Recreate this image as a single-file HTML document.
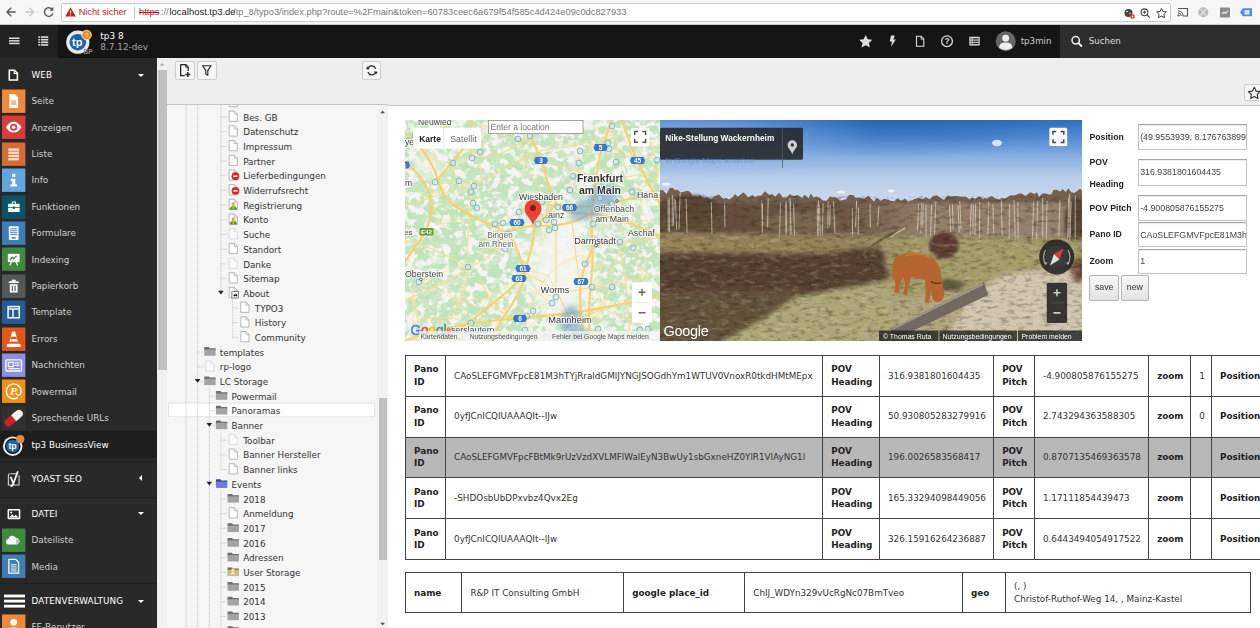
<!DOCTYPE html>
<html lang="de"><head><meta charset="utf-8"><title>tp3 8 [TYPO3 CMS 8.7.12-dev]</title>
<style>
*{box-sizing:border-box;margin:0;padding:0}
html,body{width:1260px;height:628px;overflow:hidden;background:#fff}
body{position:relative;font-family:"DejaVu Sans","Liberation Sans",sans-serif;font-size:8.8px;color:#333}
.abs{position:absolute}
/* browser chrome */
#chrome{left:0;top:0;width:1260px;height:25px;background:#f6f6f6;border-bottom:1px solid #c8c8c8}
#url{left:60.500px;top:2.600px;width:1110.500px;height:19px;background:#fff;border:1px solid #c9c9c9;border-radius:2px}
#url span{position:absolute;top:2.400px;font-family:"Liberation Sans",sans-serif;font-size:9.6px;white-space:nowrap;line-height:12px}
/* topbar */
#topbar{left:0;top:25px;width:1260px;height:33px;background:#151515}
#tb-left{left:0;top:25px;width:58px;height:33px;background:#222}
#tb-search{left:1060px;top:25px;width:200px;height:33px;background:#2d2d2d}
/* module menu */
#modmenu{left:0;top:58px;width:156.500px;height:570px;background:#292929;overflow:hidden}
.mod{position:absolute;left:0;width:157px;height:26.4px}
.mod .ic{position:absolute;left:2.4px;top:1.9px;width:23.4px;height:24.4px}
.mod .lb{position:absolute;left:31.5px;top:1px;line-height:26.4px;font-size:8.8px;color:#cfcfcf;white-space:nowrap}
.mod.hd .lb{letter-spacing:.12px}
.mod.hd .lb{color:#fff}
.mod.act{background:#1e1e1e;height:26.800px}.mod.act .lb{color:#fff}
.caret{position:absolute;left:137.700px;top:12.600px;width:0;height:0;border-left:3px solid transparent;border-right:3px solid transparent;border-top:3.5px solid #fff}
.caretl{position:absolute;left:138.5px;top:9.5px;width:0;height:0;border-top:3px solid transparent;border-bottom:3px solid transparent;border-right:3.5px solid #fff}
/* nav frame */
#nav{left:157px;top:58px;width:231px;height:570px;background:#f5f5f5;overflow:hidden}
#treetxt span{position:absolute;font-size:8.8px;line-height:11px;color:#333;white-space:nowrap}
#navsb{left:157px;top:58px;width:10px;height:570px;background:#f1f1f1}
#navtb{left:167px;top:58px;width:221px;height:47px;background:#eee;border-bottom:1px solid #c3c3c3}
.btn{position:absolute;width:19.4px;height:19px;border:1px solid #ccc;border-radius:2px;background:#f5f5f5}
/* content */
#doch{left:388px;top:58px;width:872px;height:47.5px;background:#eee;border-bottom:1px solid #c3c3c3}

#form .fl{position:absolute;left:1089.500px;font-family:"Liberation Sans",sans-serif;font-weight:bold;font-size:8.700px;line-height:10px;color:#222;white-space:nowrap}
#form .fi{position:absolute;left:1138px;width:109px;border:1px solid #c2c2c2;border-top-color:#a5a5a5;box-shadow:inset 0 1px 1px rgba(0,0,0,.08);background:#fff;font-family:"Liberation Sans",sans-serif;font-size:8.800px;color:#444;padding-left:1.200px;white-space:nowrap;overflow:hidden;display:flex;align-items:center}
#form .fb{position:absolute;top:275.200px;height:26px;border:1px solid #b3b3b3;border-radius:2px;background:linear-gradient(#f7f7f7,#e2e2e2);font-family:"Liberation Sans",sans-serif;font-size:8.800px;color:#333;text-align:center;line-height:23.600px}
table{border-collapse:collapse;table-layout:fixed;font-size:8.800px;line-height:12.400px;color:#333}
#t1{left:405px;top:354.900px;width:866px}
#t2{left:405px;top:572.100px;width:845.300px}
td,th{border:.8px solid #444;padding:7.500px 8px;text-align:left;vertical-align:middle;height:40.600px;overflow:hidden}
#t2 td,#t2 th{height:40.400px}
th{font-weight:bold;color:#222}
tr.sel td,tr.sel th{background:#b8b8b8}
</style></head><body>
<div id="chrome" class="abs">
 <svg class="abs" style="left:0;top:0" width="60" height="25" viewBox="0 0 60 25"><g fill="none" stroke-width="1.4">
  <path d="M15.700 12h-8M11.200 7.800l-4.200 4.200 4.200 4.200" stroke="#555"/>
  <path d="M25.500 12h8M29.500 7.800l4.200 4.200-4.200 4.200" stroke="#c9c9c9"/>
  <path d="M52 9.200a4.300 4.300 0 1 0 .8 4.300" stroke="#555"/></g><path d="M53.300 6.800v4h-4z" fill="#555"/></svg>
 <div id="url" class="abs">
  <svg class="abs" style="left:3px;top:3.500px" width="11" height="10" viewBox="0 0 11 10"><path d="M5.500 0.300l5.300 9.200h-10.600z" fill="#c5221f"/><rect x="5" y="3.300" width="1" height="3.300" fill="#fff"/><rect x="5" y="7.300" width="1" height="1.100" fill="#fff"/></svg>
  <span style="left:17.200px;color:#c5221f;font-size:9.200px">Nicht sicher</span>
  <i class="abs" style="left:72.500px;top:3px;width:1px;height:12px;background:#c4c4c4"></i>
  <span style="left:77.500px;color:#c5221f;font-size:9.400px;text-decoration:line-through">https</span>
  <span style="left:99.300px;color:#777;font-size:9.400px">://</span>
  <span style="left:108px;color:#222;font-size:9.450px">localhost.tp3.de</span>
  <span style="left:171.600px;color:#777;font-size:9.300px">/tp_8/typo3/index.php?route=%2Fmain&amp;token=60783ceec6a679f54f585c4d424e09c0dc827933</span>
  <svg class="abs" style="left:1060px;top:1px" width="48" height="16" viewBox="0 0 48 16">
   <circle cx="6.500" cy="8" r="4" fill="#444"/><circle cx="5" cy="6.500" r=".8" fill="#fff"/><circle cx="8" cy="8.500" r=".7" fill="#fff"/><rect x="8.500" y="9.500" width="4" height="4" fill="#d93025"/><rect x="9.700" y="10.700" width="1.600" height="1.600" fill="#fff"/>
   <circle cx="22.500" cy="7.300" r="3.400" fill="none" stroke="#444" stroke-width="1.100"/><path d="M25 9.800l2.800 2.800M21 7.300h3M22.500 5.800v3" stroke="#444" stroke-width="1.100"/>
   <path d="M39.500 3.300l1.500 3.200 3.400.4-2.500 2.400.7 3.400-3.100-1.700-3.100 1.700.7-3.400-2.500-2.400 3.400-.4z" fill="none" stroke="#444" stroke-width="1"/></svg>
 </div>
 <svg class="abs" style="left:1172px;top:0" width="88" height="25" viewBox="0 0 88 25">
  <path d="M6 8.500h9.500v7.500h-4.500" fill="none" stroke="#555" stroke-width="1.100"/><path d="M6 16v-1.200a1.200 1.200 0 0 1 1.200 1.200zM6 12.800a3.200 3.200 0 0 1 3.200 3.200M6 10.800a5.200 5.200 0 0 1 5.200 5.200" fill="none" stroke="#555" stroke-width="1"/>
  <circle cx="31.300" cy="12.300" r="5" fill="#b9b9b9"/><path d="M28.500 9l5.600 6.600M34.100 9l-5.600 6.600" stroke="#ddd" stroke-width="1.500"/>
  <rect x="48" y="7.500" width="10" height="10" rx="1" fill="#8a8a8a"/><path d="M50 14l2-2 1.500 1.500 2.500-3" stroke="#eee" stroke-width="1.100" fill="none"/>
  <path d="M68 12.300l3-4h9v8h-9z" fill="#4a90e2"/><rect x="72.500" y="10" width="5" height="4.600" fill="#d6e6fa"/></svg>
</div>
<div id="topbar" class="abs"></div>
<div id="tb-left" class="abs"></div>
<div id="tb-search" class="abs"></div>
<svg class="abs" style="left:0;top:25px" width="160" height="33" viewBox="0 0 160 33">
 <g fill="#ddd"><rect x="9" y="12.500" width="10.500" height="1.500"/><rect x="9" y="15.100" width="10.500" height="1.500"/><rect x="9" y="17.700" width="10.500" height="1.500"/>
 <rect x="38.300" y="11.300" width="1.600" height="1.600"/><rect x="38.300" y="13.900" width="1.600" height="1.600"/><rect x="38.300" y="16.500" width="1.600" height="1.600"/><rect x="38.300" y="19.100" width="1.600" height="1.600"/>
 <rect x="40.800" y="11.300" width="7.400" height="1.600"/><rect x="40.800" y="13.900" width="7.400" height="1.600"/><rect x="40.800" y="16.500" width="7.400" height="1.600"/><rect x="40.800" y="19.100" width="7.400" height="1.600"/></g>
 <circle cx="77.800" cy="17.200" r="11.600" fill="#e9e9e9"/><circle cx="77.800" cy="17.200" r="8.300" fill="#1a64a8"/>
 <text x="77.300" y="21" text-anchor="middle" font-family="Liberation Sans,sans-serif" font-weight="bold" font-size="11" fill="#fff">tp</text>
 <circle cx="86.600" cy="10" r="4.800" fill="#ee8a2a" stroke="#f4f4f4" stroke-width=".8"/><text x="86.600" y="12.200" text-anchor="middle" font-family="Liberation Sans,sans-serif" font-size="6" fill="#fbd9b5">3</text>
 <text x="83.600" y="29.300" font-family="Liberation Sans,sans-serif" font-weight="bold" font-size="6.500" fill="#8d8d8d">BP</text>
</svg>
<div class="abs" style="left:100.300px;top:31.400px;font-size:8.900px;line-height:11px;color:#fff;white-space:nowrap">tp3 8</div>
<div class="abs" style="left:100.300px;top:41.600px;font-size:8.900px;line-height:11px;color:#a3a3a3;white-space:nowrap">8.7.12-dev</div>
<svg class="abs" style="left:855px;top:25px" width="240" height="33" viewBox="0 0 240 33">
 <path d="M10.700 10l2 4.300 4.600.5-3.400 3.200.9 4.600-4.100-2.300-4.100 2.300.9-4.600-3.400-3.200 4.600-.5z" fill="#ddd"/>
 <path d="M36 10.500h3.800l-1.500 4h2.500l-4.800 7.500 1-5.500h-2.300z" fill="#ddd"/>
 <path d="M61.500 11.300h4.700l2.600 2.600v7.400h-7.300z" fill="none" stroke="#ddd" stroke-width="1.100"/><path d="M66 11.300v2.800h2.800" fill="none" stroke="#ddd" stroke-width=".9"/>
 <circle cx="92" cy="16.200" r="5.400" fill="none" stroke="#ddd" stroke-width="1.300"/><text x="92" y="19.400" text-anchor="middle" font-family="Liberation Sans,sans-serif" font-weight="bold" font-size="8.500" fill="#ddd">?</text>
 <g fill="#ddd"><rect x="114.300" y="11.800" width="10.400" height="8.800" rx=".6"/></g><g fill="#151515"><rect x="115.500" y="13.300" width="1.300" height="1.200"/><rect x="117.600" y="13.300" width="6" height="1.200"/><rect x="115.500" y="15.600" width="1.300" height="1.200"/><rect x="117.600" y="15.600" width="6" height="1.200"/><rect x="115.500" y="17.900" width="1.300" height="1.200"/><rect x="117.600" y="17.900" width="6" height="1.200"/></g>
 <circle cx="150.700" cy="16.300" r="10" fill="#666"/><circle cx="150.700" cy="13.200" r="3.400" fill="#eee"/><path d="M144 22.500c.5-4 3-5 6.700-5s6.200 1 6.700 5c-3 3.200-10.400 3.200-13.400 0z" fill="#eee"/>
 <circle cx="220.700" cy="15.300" r="3.700" fill="none" stroke="#eee" stroke-width="1.500"/><path d="M223.400 18l3 3" stroke="#eee" stroke-width="1.800" stroke-linecap="round"/>
</svg>
<div class="abs" style="left:1020.700px;top:36px;font-size:8.700px;line-height:11px;color:#ccc;white-space:nowrap">tp3min</div>
<div class="abs" style="left:1088.700px;top:36.200px;font-size:8.700px;line-height:11px;color:#ddd;white-space:nowrap">Suchen</div>
<div id="modmenu" class="abs"><div class="mod hd" style="top:3.4px"><svg class="ic" viewBox="0 0 24 24"><path d="M7.500 7h5.300l3 3v7h-8.300z" fill="none" stroke="#fff" stroke-width="1.600"/><path d="M12.500 7v3.300h3.300" fill="none" stroke="#fff" stroke-width="1.200"/></svg><span class="lb">WEB</span><i class="caret"></i></div><div class="mod " style="top:29.1px"><svg class="ic" viewBox="0 0 24 24"><rect width="24" height="24" fill="#f0883a"/><path d="M7.5 5h6l3 3v11h-9z" fill="#fff"/><rect x="9.5" y="11" width="5" height="5" fill="#f7b98a"/></svg><span class="lb">Seite</span></div><div class="mod " style="top:55.5px"><svg class="ic" viewBox="0 0 24 24"><rect width="24" height="24" fill="#d63e3e"/><path d="M4 12c2.5-4 5-5.5 8-5.5s5.500 1.500 8 5.500c-2.500 4-5 5.500-8 5.500s-5.500-1.500-8-5.500z" fill="#fff"/><circle cx="12" cy="12" r="3.600" fill="#d63e3e"/><circle cx="12" cy="12" r="1.800" fill="#fff"/></svg><span class="lb">Anzeigen</span></div><div class="mod " style="top:81.9px"><svg class="ic" viewBox="0 0 24 24"><rect width="24" height="24" fill="#d56b35"/><g fill="#f6d9c8"><rect x="6.500" y="6" width="11" height="2.500"/><rect x="6.500" y="9.300" width="11" height="2.500"/><rect x="6.500" y="12.600" width="11" height="2.500"/><rect x="6.500" y="15.900" width="11" height="2.500"/></g></svg><span class="lb">Liste</span></div><div class="mod " style="top:108.3px"><svg class="ic" viewBox="0 0 24 24"><rect width="24" height="24" fill="#62a5df"/><g fill="#fff"><rect x="10.500" y="5.500" width="3.200" height="3.200"/><path d="M9 10.500h4.700v6h1.800v2h-7v-2h2v-4h-1.500z"/></g></svg><span class="lb">Info</span></div><div class="mod " style="top:134.7px"><svg class="ic" viewBox="0 0 24 24"><rect width="24" height="24" fill="#0c5365"/><g fill="#fff"><path d="M10 8.500v-2.300h4.400v2.300h-1.100v-1.200h-2.200v1.200z"/><rect x="6.300" y="8.500" width="11.800" height="3.500"/><rect x="6.300" y="12.700" width="11.800" height="4.200"/></g><rect x="11.300" y="11.200" width="1.800" height="2.600" fill="#0c5365"/></svg><span class="lb">Funktionen</span></div><div class="mod " style="top:161.1px"><svg class="ic" viewBox="0 0 24 24"><rect width="24" height="24" fill="#3e7db8"/><rect x="7" y="5" width="10" height="14" rx="1" fill="#fff"/><g fill="#3e7db8"><rect x="8.500" y="7" width="7" height="1"/><rect x="8.500" y="9" width="7" height="1"/><rect x="8.500" y="11" width="7" height="1"/><rect x="8.500" y="13" width="7" height="1"/><rect x="10" y="16" width="4" height="1.600"/></g></svg><span class="lb">Formulare</span></div><div class="mod " style="top:187.5px"><svg class="ic" viewBox="0 0 24 24"><rect width="24" height="24" fill="#3f8a3d"/><rect x="6" y="6.500" width="12" height="8.500" fill="#fff"/><path d="M8 13l2.500-3 1.500 1.500 3-3" stroke="#3f8a3d" stroke-width="1.300" fill="none"/><path d="M9.500 15l-1.500 3.500M14.500 15l1.500 3.500" stroke="#fff" stroke-width="1.300"/></svg><span class="lb">Indexing</span></div><div class="mod " style="top:213.9px"><svg class="ic" viewBox="0 0 24 24"><rect width="24" height="24" fill="#555859"/><g fill="#fff"><rect x="7" y="7" width="10" height="1.800"/><rect x="10" y="5.300" width="4" height="2"/><path d="M8 10h8v8.500h-8z"/></g><g fill="#555859"><rect x="10" y="11.500" width="1.200" height="5.500"/><rect x="12.800" y="11.500" width="1.200" height="5.500"/></g></svg><span class="lb">Papierkorb</span></div><div class="mod " style="top:240.3px"><svg class="ic" viewBox="0 0 24 24"><rect width="24" height="24" fill="#235c99"/><rect x="5.500" y="5.500" width="13" height="13" fill="#fff"/><g fill="#235c99"><rect x="7" y="9.500" width="3.500" height="7.500"/><rect x="12" y="9.500" width="5" height="7.500"/><rect x="7" y="7" width="10" height="1"/></g></svg><span class="lb">Template</span></div><div class="mod " style="top:266.7px"><svg class="ic" viewBox="0 0 24 24"><rect width="24" height="24" fill="#e2561c"/><path d="M10.500 4h3l3.500 13h2v3h-14v-3h2z" fill="#fff"/><g fill="#e2561c"><path d="M9.300 9.500h5.400l.8 2.500h-7z"/><path d="M7.700 14.300h8.600l.7 2.500h-10z"/></g></svg><span class="lb">Errors</span></div><div class="mod " style="top:293.1px"><svg class="ic" viewBox="0 0 24 24"><rect width="24" height="24" fill="#8b8fe0"/><rect x="4" y="6.500" width="16" height="11.500" rx="1" fill="none" stroke="#fff" stroke-width="1.400"/><rect x="6.500" y="9" width="5" height="4.500" fill="none" stroke="#fff" stroke-width="1.200"/><g fill="#fff"><rect x="13" y="9" width="5" height="1.200"/><rect x="13" y="11.500" width="5" height="1.200"/><rect x="6.500" y="15" width="11.500" height="1.200"/></g></svg><span class="lb">Nachrichten</span></div><div class="mod " style="top:319.5px"><svg class="ic" viewBox="0 0 24 24"><rect width="24" height="24" fill="#f29016"/><path d="M16.500 18.300a7.600 7.600 0 1 1 3.100-6.100c0 2.600-1.300 3.800-2.900 3.800s-2.300-1.100-2.100-2.600" fill="none" stroke="#fff" stroke-width="1.400"/><text x="11.800" y="15.800" text-anchor="middle" font-family="Liberation Serif,serif" font-style="italic" font-weight="bold" font-size="11.500" fill="#fff">P</text></svg><span class="lb">Powermail</span></div><div class="mod " style="top:345.9px"><svg class="ic" viewBox="0 0 24 24"><rect width="24" height="24" fill="#313131"/><g transform="rotate(-40 12 12)"><rect x="1" y="8" width="11" height="8" rx="4" fill="#cf2020"/><rect x="11" y="8" width="12" height="8" rx="4" fill="#f4f4f4"/><rect x="8" y="8" width="6" height="8" fill="#cf2020"/><rect x="12" y="8" width="5" height="8" fill="#f4f4f4"/></g></svg><span class="lb">Sprechende URLs</span></div><div class="mod act" style="top:373.0px"><svg class="ic" viewBox="0 0 24 24"><circle cx="11" cy="13" r="10" fill="#f2f2f2"/><circle cx="11" cy="13" r="8" fill="#0d0d0d"/><circle cx="11" cy="13" r="6.700" fill="#1a64a8"/><text x="10.800" y="16.300" text-anchor="middle" font-family="Liberation Sans,sans-serif" font-weight="bold" font-size="9" fill="#fff">tp</text><circle cx="18.700" cy="5.800" r="4" fill="#ee8a2a" stroke="#999" stroke-width=".7"/></svg><span class="lb">tp3 BusinessView</span></div><div class="mod hd" style="top:407.1px"><svg class="ic" viewBox="0 0 24 24"><path d="M9 6.500h6M17.500 8v10h-11v-9.500a2 2 0 0 1 2-2" fill="none" stroke="#ddd" stroke-width="1.100"/><path d="M8.800 9.500l2.700 6.500M16.300 4l-5 13.500c-.5 1.300-1.300 1.800-2.500 1.800" stroke="#fff" stroke-width="1.800" fill="none"/></svg><span class="lb">YOAST SEO</span><i class="caretl"></i></div><div class="mod hd" style="top:441.8px"><svg class="ic" viewBox="0 0 24 24"><rect x="6.500" y="7.500" width="11.500" height="9" rx="0.500" fill="none" stroke="#fff" stroke-width="1.600"/><path d="M7.500 15.500l3-3.500 2 2 1.500-1.500 3 3z" fill="#fff"/><circle cx="9.500" cy="10.300" r="1" fill="#fff"/></svg><span class="lb">DATEI</span><i class="caret"></i></div><div class="mod " style="top:468.4px"><svg class="ic" viewBox="0 0 24 24"><rect width="24" height="24" fill="#3f8a3d"/><path d="M6 16.500a3 3 0 0 1 .5-5.800a4 4 0 0 1 7.500-1.200a3.500 3.500 0 0 1 0 7z" fill="#fff"/><path d="M14.500 9.500l4.500 3.500l-4.500 3.500z" fill="#a9d0a8"/></svg><span class="lb">Dateiliste</span></div><div class="mod " style="top:494.6px"><svg class="ic" viewBox="0 0 24 24"><rect width="24" height="24" fill="#3e7db8"/><path d="M7 5h7l3 3v11h-10z" fill="none" stroke="#fff" stroke-width="1.300"/><g fill="#fff"><rect x="9" y="10" width="6" height="1"/><rect x="9" y="12.200" width="6" height="1"/><rect x="9" y="14.400" width="6" height="1"/><rect x="9" y="16.400" width="6" height="1"/></g></svg><span class="lb">Media</span></div><div class="mod hd" style="top:529.3px"><svg class="ic" style="left:3.500px;width:21px" viewBox="0 0 21 24" preserveAspectRatio="none"><g fill="#fff"><rect x="0" y="5.500" width="21" height="2.800"/><rect x="0" y="10.500" width="21" height="2.800"/><rect x="0" y="15.500" width="21" height="2.800"/></g></svg><span class="lb">DATENVERWALTUNG</span><i class="caret"></i></div><div class="mod " style="top:554.6px"><svg class="ic" viewBox="0 0 24 24"><rect width="24" height="24" fill="#f0883a"/><circle cx="12" cy="8" r="3.500" fill="#fff"/><path d="M5 20c0-5 3-7 7-7s7 2 7 7z" fill="#fff"/></svg><span class="lb">FE-Benutzer</span></div><div class="abs" style="left:0;top:403.4px;width:157px;height:1px;background:#202020"></div><div class="abs" style="left:0;top:438.8px;width:157px;height:1px;background:#202020"></div><div class="abs" style="left:0;top:525.3px;width:157px;height:1px;background:#202020"></div></div><!--/MODS-->
<div id="nav" class="abs"><svg class="abs" style="left:0;top:0" width="231" height="570" viewBox="157 58 231 570"><rect x="168.4" y="403.00" width="206.300" height="13.800" fill="#fff" stroke="#dcdcdc" stroke-width=".8"/><path d="M186.00 105.00V628.00" stroke="#b5b5b5" stroke-width=".8" stroke-dasharray=".8 .8"/><path d="M197.65 105.00V628.00" stroke="#b5b5b5" stroke-width=".8" stroke-dasharray=".8 .8"/><path d="M220.95 105.00V293.28" stroke="#b5b5b5" stroke-width=".8" stroke-dasharray=".8 .8"/><path d="M232.60 299.28V337.35" stroke="#b5b5b5" stroke-width=".8" stroke-dasharray=".8 .8"/><path d="M209.30 387.42V628.00" stroke="#b5b5b5" stroke-width=".8" stroke-dasharray=".8 .8"/><path d="M220.95 431.49V469.56" stroke="#b5b5b5" stroke-width=".8" stroke-dasharray=".8 .8"/><path d="M220.95 490.25V628.00" stroke="#b5b5b5" stroke-width=".8" stroke-dasharray=".8 .8"/><path d="M220.95 102.31h6.500" stroke="#b5b5b5" stroke-width=".8" stroke-dasharray=".8 .8"/><g opacity="1"><path d="M229.15 96.41h5.2l3 3v7.300h-8.200z" fill="#fff" stroke="#9a9a9a" stroke-width=".7"/><path d="M234.25 96.51v3h3" fill="none" stroke="#9a9a9a" stroke-width=".6"/></g><path d="M220.95 117.00h6.500" stroke="#b5b5b5" stroke-width=".8" stroke-dasharray=".8 .8"/><g opacity="1"><path d="M229.15 111.10h5.2l3 3v7.300h-8.200z" fill="#fff" stroke="#9a9a9a" stroke-width=".7"/><path d="M234.25 111.20v3h3" fill="none" stroke="#9a9a9a" stroke-width=".6"/></g><path d="M220.95 131.69h6.500" stroke="#b5b5b5" stroke-width=".8" stroke-dasharray=".8 .8"/><g opacity="1"><path d="M229.15 125.79h5.2l3 3v7.300h-8.200z" fill="#fff" stroke="#9a9a9a" stroke-width=".7"/><path d="M234.25 125.89v3h3" fill="none" stroke="#9a9a9a" stroke-width=".6"/></g><path d="M220.95 146.38h6.500" stroke="#b5b5b5" stroke-width=".8" stroke-dasharray=".8 .8"/><g opacity="1"><path d="M229.15 140.48h5.2l3 3v7.300h-8.200z" fill="#fff" stroke="#9a9a9a" stroke-width=".7"/><path d="M234.25 140.58v3h3" fill="none" stroke="#9a9a9a" stroke-width=".6"/></g><path d="M220.95 161.07h6.500" stroke="#b5b5b5" stroke-width=".8" stroke-dasharray=".8 .8"/><g opacity="1"><path d="M229.15 155.17h5.2l3 3v7.300h-8.200z" fill="#fff" stroke="#9a9a9a" stroke-width=".7"/><path d="M234.25 155.27v3h3" fill="none" stroke="#9a9a9a" stroke-width=".6"/></g><path d="M220.95 175.76h6.500" stroke="#b5b5b5" stroke-width=".8" stroke-dasharray=".8 .8"/><g opacity="1"><path d="M229.15 169.86h5.2l3 3v7.300h-8.200z" fill="#fff" stroke="#9a9a9a" stroke-width=".7"/><path d="M234.25 169.96v3h3" fill="none" stroke="#9a9a9a" stroke-width=".6"/></g><circle cx="235.45" cy="176.16" r="3.9" fill="#d42a2a"/><rect x="233.35" y="175.46" width="4.200" height="1.400" fill="#fff"/><path d="M220.95 190.45h6.500" stroke="#b5b5b5" stroke-width=".8" stroke-dasharray=".8 .8"/><g opacity="1"><path d="M229.15 184.55h5.2l3 3v7.300h-8.200z" fill="#fff" stroke="#9a9a9a" stroke-width=".7"/><path d="M234.25 184.65v3h3" fill="none" stroke="#9a9a9a" stroke-width=".6"/></g><circle cx="235.45" cy="190.85" r="3.9" fill="#d42a2a"/><rect x="233.35" y="190.15" width="4.200" height="1.400" fill="#fff"/><path d="M220.95 205.14h6.500" stroke="#b5b5b5" stroke-width=".8" stroke-dasharray=".8 .8"/><g opacity="1"><path d="M229.15 199.24h5.2l3 3v7.300h-8.200z" fill="#fff" stroke="#9a9a9a" stroke-width=".7"/><path d="M234.25 199.34v3h3" fill="none" stroke="#9a9a9a" stroke-width=".6"/></g><circle cx="233.35" cy="204.24" r="1.700" fill="#e8b52a"/><path d="M229.45 209.74c.8-3 2.200-4 3.900-4s3.100 1 3.900 4z" fill="#5a9a3a"/><rect x="232.55" y="205.54" width="1.600" height="3.400" fill="#e8b52a"/><path d="M220.95 219.83h6.500" stroke="#b5b5b5" stroke-width=".8" stroke-dasharray=".8 .8"/><g opacity="1"><path d="M229.15 213.93h5.2l3 3v7.300h-8.200z" fill="#fff" stroke="#9a9a9a" stroke-width=".7"/><path d="M234.25 214.03v3h3" fill="none" stroke="#9a9a9a" stroke-width=".6"/></g><circle cx="233.35" cy="218.93" r="1.700" fill="#e8b52a"/><path d="M229.45 224.43c.8-3 2.200-4 3.900-4s3.100 1 3.900 4z" fill="#5a9a3a"/><rect x="232.55" y="220.23" width="1.600" height="3.400" fill="#e8b52a"/><path d="M220.95 234.52h6.500" stroke="#b5b5b5" stroke-width=".8" stroke-dasharray=".8 .8"/><g opacity="0.5"><path d="M229.15 228.62h5.2l3 3v7.300h-8.200z" fill="#fff" stroke="#aaa" stroke-width=".7"/><path d="M234.25 228.72v3h3" fill="none" stroke="#aaa" stroke-width=".6"/></g><path d="M220.95 249.21h6.500" stroke="#b5b5b5" stroke-width=".8" stroke-dasharray=".8 .8"/><g opacity="1"><path d="M229.15 243.31h5.2l3 3v7.300h-8.200z" fill="#fff" stroke="#9a9a9a" stroke-width=".7"/><path d="M234.25 243.41v3h3" fill="none" stroke="#9a9a9a" stroke-width=".6"/></g><path d="M220.95 263.90h6.500" stroke="#b5b5b5" stroke-width=".8" stroke-dasharray=".8 .8"/><g opacity="0.5"><path d="M229.15 258.00h5.2l3 3v7.300h-8.200z" fill="#fff" stroke="#aaa" stroke-width=".7"/><path d="M234.25 258.10v3h3" fill="none" stroke="#aaa" stroke-width=".6"/></g><path d="M220.95 278.59h6.500" stroke="#b5b5b5" stroke-width=".8" stroke-dasharray=".8 .8"/><g opacity="1"><path d="M229.15 272.69h5.2l3 3v7.300h-8.200z" fill="#fff" stroke="#9a9a9a" stroke-width=".7"/><path d="M234.25 272.79v3h3" fill="none" stroke="#9a9a9a" stroke-width=".6"/></g><path d="M218.15 290.78h5.600l-2.800 3.800z" fill="#222"/><path d="M224.45 293.28h2.500" stroke="#b5b5b5" stroke-width=".8" stroke-dasharray=".8 .8"/><g opacity="1"><path d="M229.15 287.38h5.2l3 3v7.300h-8.200z" fill="#fff" stroke="#9a9a9a" stroke-width=".7"/><path d="M234.25 287.48v3h3" fill="none" stroke="#9a9a9a" stroke-width=".6"/></g><rect x="231.85" y="291.58" width="6.400" height="6.400" fill="#fff" stroke="#555" stroke-width=".7"/><path d="M233.45 296.08v-1.600h2.400v-1.200l1.700 1.900-1.700 1.900v-1.200h-1.400v.9z" fill="#111"/><path d="M232.60 307.97h6.500" stroke="#b5b5b5" stroke-width=".8" stroke-dasharray=".8 .8"/><g opacity="1"><path d="M240.80 302.07h5.2l3 3v7.300h-8.200z" fill="#fff" stroke="#9a9a9a" stroke-width=".7"/><path d="M245.90 302.17v3h3" fill="none" stroke="#9a9a9a" stroke-width=".6"/></g><path d="M232.60 322.66h6.500" stroke="#b5b5b5" stroke-width=".8" stroke-dasharray=".8 .8"/><g opacity="1"><path d="M240.80 316.76h5.2l3 3v7.300h-8.200z" fill="#fff" stroke="#9a9a9a" stroke-width=".7"/><path d="M245.90 316.86v3h3" fill="none" stroke="#9a9a9a" stroke-width=".6"/></g><path d="M232.60 337.35h6.500" stroke="#b5b5b5" stroke-width=".8" stroke-dasharray=".8 .8"/><g opacity="1"><path d="M240.80 331.45h5.2l3 3v7.300h-8.200z" fill="#fff" stroke="#9a9a9a" stroke-width=".7"/><path d="M245.90 331.55v3h3" fill="none" stroke="#9a9a9a" stroke-width=".6"/></g><path d="M197.65 352.04h6.500" stroke="#b5b5b5" stroke-width=".8" stroke-dasharray=".8 .8"/><path d="M204.25 347.04h4.600l.8 1.200h6v2h-11.400z" fill="#6e6e6e"/><rect x="204.25" y="349.44" width="11.400" height="6.300" fill="#a3a3a3"/><path d="M197.65 366.73h6.500" stroke="#b5b5b5" stroke-width=".8" stroke-dasharray=".8 .8"/><g opacity="0.5"><path d="M205.85 360.83h5.2l3 3v7.300h-8.200z" fill="#fff" stroke="#aaa" stroke-width=".7"/><path d="M210.95 360.93v3h3" fill="none" stroke="#aaa" stroke-width=".6"/></g><path d="M194.85 378.92h5.600l-2.800 3.800z" fill="#222"/><path d="M201.15 381.42h2.500" stroke="#b5b5b5" stroke-width=".8" stroke-dasharray=".8 .8"/><path d="M204.25 376.42h4.600l.8 1.200h6v2h-11.400z" fill="#6e6e6e"/><rect x="204.25" y="378.82" width="11.400" height="6.300" fill="#a3a3a3"/><path d="M209.30 396.11h6.500" stroke="#b5b5b5" stroke-width=".8" stroke-dasharray=".8 .8"/><path d="M215.90 391.11h4.600l.8 1.200h6v2h-11.400z" fill="#6e6e6e"/><rect x="215.90" y="393.51" width="11.400" height="6.300" fill="#a3a3a3"/><path d="M209.30 410.80h6.500" stroke="#b5b5b5" stroke-width=".8" stroke-dasharray=".8 .8"/><path d="M215.90 405.80h4.600l.8 1.200h6v2h-11.400z" fill="#6e6e6e"/><rect x="215.90" y="408.20" width="11.400" height="6.300" fill="#a3a3a3"/><path d="M206.50 422.99h5.600l-2.800 3.800z" fill="#222"/><path d="M212.80 425.49h2.500" stroke="#b5b5b5" stroke-width=".8" stroke-dasharray=".8 .8"/><path d="M215.90 420.49h4.600l.8 1.200h6v2h-11.400z" fill="#6e6e6e"/><rect x="215.90" y="422.89" width="11.400" height="6.300" fill="#a3a3a3"/><path d="M220.95 440.18h6.500" stroke="#b5b5b5" stroke-width=".8" stroke-dasharray=".8 .8"/><g opacity="0.5"><path d="M229.15 434.28h5.2l3 3v7.300h-8.200z" fill="#fff" stroke="#aaa" stroke-width=".7"/><path d="M234.25 434.38v3h3" fill="none" stroke="#aaa" stroke-width=".6"/></g><path d="M220.95 454.87h6.500" stroke="#b5b5b5" stroke-width=".8" stroke-dasharray=".8 .8"/><g opacity="1"><path d="M229.15 448.97h5.2l3 3v7.300h-8.200z" fill="#fff" stroke="#9a9a9a" stroke-width=".7"/><path d="M234.25 449.07v3h3" fill="none" stroke="#9a9a9a" stroke-width=".6"/></g><path d="M220.95 469.56h6.500" stroke="#b5b5b5" stroke-width=".8" stroke-dasharray=".8 .8"/><g opacity="1"><path d="M229.15 463.66h5.2l3 3v7.300h-8.200z" fill="#fff" stroke="#9a9a9a" stroke-width=".7"/><path d="M234.25 463.76v3h3" fill="none" stroke="#9a9a9a" stroke-width=".6"/></g><path d="M206.50 481.75h5.600l-2.800 3.800z" fill="#222"/><path d="M212.80 484.25h2.500" stroke="#b5b5b5" stroke-width=".8" stroke-dasharray=".8 .8"/><path d="M215.90 479.25h4.600l.8 1.200h6v2h-11.400z" fill="#3a3fa8"/><rect x="215.90" y="481.65" width="11.400" height="6.300" fill="#6f7ae0"/><path d="M220.95 498.94h6.500" stroke="#b5b5b5" stroke-width=".8" stroke-dasharray=".8 .8"/><path d="M227.55 493.94h4.600l.8 1.200h6v2h-11.400z" fill="#6e6e6e"/><rect x="227.55" y="496.34" width="11.400" height="6.300" fill="#a3a3a3"/><path d="M220.95 513.63h6.500" stroke="#b5b5b5" stroke-width=".8" stroke-dasharray=".8 .8"/><g opacity="1"><path d="M229.15 507.73h5.2l3 3v7.300h-8.200z" fill="#fff" stroke="#9a9a9a" stroke-width=".7"/><path d="M234.25 507.83v3h3" fill="none" stroke="#9a9a9a" stroke-width=".6"/></g><path d="M220.95 528.32h6.500" stroke="#b5b5b5" stroke-width=".8" stroke-dasharray=".8 .8"/><path d="M227.55 523.32h4.600l.8 1.200h6v2h-11.400z" fill="#6e6e6e"/><rect x="227.55" y="525.72" width="11.400" height="6.300" fill="#a3a3a3"/><path d="M220.95 543.01h6.500" stroke="#b5b5b5" stroke-width=".8" stroke-dasharray=".8 .8"/><path d="M227.55 538.01h4.600l.8 1.200h6v2h-11.400z" fill="#6e6e6e"/><rect x="227.55" y="540.41" width="11.400" height="6.300" fill="#a3a3a3"/><path d="M220.95 557.70h6.500" stroke="#b5b5b5" stroke-width=".8" stroke-dasharray=".8 .8"/><path d="M227.55 552.70h4.600l.8 1.200h6v2h-11.400z" fill="#6e6e6e"/><rect x="227.55" y="555.10" width="11.400" height="6.300" fill="#a3a3a3"/><path d="M220.95 572.39h6.500" stroke="#b5b5b5" stroke-width=".8" stroke-dasharray=".8 .8"/><path d="M227.55 567.39h4.600l.8 1.200h6v2h-11.400z" fill="#7d6f3c"/><rect x="227.55" y="569.79" width="11.400" height="6.300" fill="#c9b97e"/><circle cx="232.85" cy="570.19" r="1.600" fill="#f2e29a"/><path d="M229.85 574.19l3-3 3 3z" fill="#f6efc8"/><path d="M220.95 587.08h6.500" stroke="#b5b5b5" stroke-width=".8" stroke-dasharray=".8 .8"/><path d="M227.55 582.08h4.600l.8 1.200h6v2h-11.400z" fill="#6e6e6e"/><rect x="227.55" y="584.48" width="11.400" height="6.300" fill="#a3a3a3"/><path d="M220.95 601.77h6.500" stroke="#b5b5b5" stroke-width=".8" stroke-dasharray=".8 .8"/><path d="M227.55 596.77h4.600l.8 1.200h6v2h-11.400z" fill="#6e6e6e"/><rect x="227.55" y="599.17" width="11.400" height="6.300" fill="#a3a3a3"/><path d="M220.95 616.46h6.500" stroke="#b5b5b5" stroke-width=".8" stroke-dasharray=".8 .8"/><path d="M227.55 611.46h4.600l.8 1.200h6v2h-11.400z" fill="#6e6e6e"/><rect x="227.55" y="613.86" width="11.400" height="6.300" fill="#a3a3a3"/><path d="M220.95 631.15h6.500" stroke="#b5b5b5" stroke-width=".8" stroke-dasharray=".8 .8"/><path d="M227.55 626.15h4.600l.8 1.200h6v2h-11.400z" fill="#6e6e6e"/><rect x="227.55" y="628.55" width="11.400" height="6.300" fill="#a3a3a3"/></svg><div id="treetxt"><span style="left:86.15px;top:54.60px">Bes. GB</span><span style="left:86.15px;top:69.29px">Datenschutz</span><span style="left:86.15px;top:83.98px">Impressum</span><span style="left:86.15px;top:98.67px">Partner</span><span style="left:86.15px;top:113.36px">Lieferbedingungen</span><span style="left:86.15px;top:128.05px">Widerrufsrecht</span><span style="left:86.15px;top:142.74px">Registrierung</span><span style="left:86.15px;top:157.43px">Konto</span><span style="left:86.15px;top:172.12px">Suche</span><span style="left:86.15px;top:186.81px">Standort</span><span style="left:86.15px;top:201.50px">Danke</span><span style="left:86.15px;top:216.19px">Sitemap</span><span style="left:86.15px;top:230.88px">About</span><span style="left:97.80px;top:245.57px">TYPO3</span><span style="left:97.80px;top:260.26px">History</span><span style="left:97.80px;top:274.95px">Community</span><span style="left:62.85px;top:289.64px">templates</span><span style="left:62.85px;top:304.33px">rp-logo</span><span style="left:62.85px;top:319.02px">LC Storage</span><span style="left:74.50px;top:333.71px">Powermail</span><span style="left:74.50px;top:348.40px">Panoramas</span><span style="left:74.50px;top:363.09px">Banner</span><span style="left:86.15px;top:377.78px">Toolbar</span><span style="left:86.15px;top:392.47px">Banner Hersteller</span><span style="left:86.15px;top:407.16px">Banner links</span><span style="left:74.50px;top:421.85px">Events</span><span style="left:86.15px;top:436.54px">2018</span><span style="left:86.15px;top:451.23px">Anmeldung</span><span style="left:86.15px;top:465.92px">2017</span><span style="left:86.15px;top:480.61px">2016</span><span style="left:86.15px;top:495.30px">Adressen</span><span style="left:86.15px;top:509.99px">User Storage</span><span style="left:86.15px;top:524.68px">2015</span><span style="left:86.15px;top:539.37px">2014</span><span style="left:86.15px;top:554.06px">2013</span></div></div><!--/NAV-->
<div id="navsb" class="abs"><i class="abs" style="left:1px;top:12px;width:9px;height:299.600px;background:#c1c1c1"></i><svg class="abs" style="left:0;top:0" width="10" height="12"><path d="M2.800 7.500l2.200-2.600 2.200 2.600z" fill="#a3a3a3"/></svg></div>
<div id="navtb" class="abs">
 <div class="btn" style="left:8.200px;top:2.700px"><svg width="18" height="17" viewBox="1 1.300 15.500 14.600"><path d="M5 3.500h4.500l2 2v3.500M8.500 13h-3.500v-9.500" fill="none" stroke="#222" stroke-width="1.100"/><path d="M9.300 3.700v2h2" fill="none" stroke="#222" stroke-width=".8"/><path d="M9 12h4.400M11.200 9.800v4.400" stroke="#222" stroke-width="1.300"/></svg></div>
 <div class="btn" style="left:30.400px;top:2.700px"><svg width="18" height="17" viewBox="0 0 18 17"><path d="M4.500 3.800h8.600l-3.300 4.600v5l-2-1.300v-3.700z" fill="none" stroke="#222" stroke-width="1.100" stroke-linejoin="round"/></svg></div>
 <div class="btn" style="left:194.500px;top:2.700px"><svg width="18" height="17" viewBox="0 0 18 17"><path d="M12.700 6.800a4.200 4.200 0 0 0-7.600-.8M4.900 10a4.200 4.200 0 0 0 7.600.8" fill="none" stroke="#222" stroke-width="1.200"/><path d="M3.400 6.800l2.800.3-1.600-2.400zM14.200 10l-2.800-.3 1.600 2.400z" fill="#222" stroke="#222" stroke-width=".6"/></svg></div>
</div>
<div class="abs" style="left:376.700px;top:105.500px;width:11.300px;height:522.500px;background:#f1f1f1"><i class="abs" style="left:2px;top:292.300px;width:8.300px;height:162.200px;background:#c1c1c1"></i><svg class="abs" style="left:0;top:0" width="11.300" height="523"><path d="M3.300 7.200l2.300-2.700 2.300 2.700z" fill="#505050"/><path d="M3.300 516.800l2.300 2.700 2.300-2.700z" fill="#505050"/></svg></div>
<div id="doch" class="abs"></div>
<!--CONTENT--><div class="abs" style="left:1243.500px;top:83.800px;width:20px;height:17.400px;border:1px solid #ccc;border-radius:2px;background:#f5f5f5"><svg width="16" height="16" viewBox="0 0 16 16" style="position:absolute;left:1px;top:.2px"><path d="M8.300 2.300l1.800 3.800 4.100.5-3 2.900.8 4.100-3.700-2-3.700 2 .8-4.100-3-2.900 4.100-.5z" fill="none" stroke="#333" stroke-width="1.100" stroke-linejoin="round"/></svg></div><svg class="abs" style="left:405px;top:120px" width="255" height="221" viewBox="405 120 255 221" font-family="Liberation Sans,sans-serif">
<defs>
<filter id="fo" x="0" y="0" width="100%" height="100%" color-interpolation-filters="sRGB"><feTurbulence type="fractalNoise" baseFrequency=".045 .05" numOctaves="4" seed="11"/><feColorMatrix values="0 0 0 0 .76  0 0 0 0 .895  0 0 0 0 .74  6 0 0 0 -2.35"/></filter>
<filter id="fo2" x="0" y="0" width="100%" height="100%" color-interpolation-filters="sRGB"><feTurbulence type="fractalNoise" baseFrequency=".13 .14" numOctaves="3" seed="5"/><feColorMatrix values="0 0 0 0 .76  0 0 0 0 .895  0 0 0 0 .74  7 0 0 0 -3.1"/></filter>
<filter id="fo3" x="0" y="0" width="100%" height="100%" color-interpolation-filters="sRGB"><feTurbulence type="fractalNoise" baseFrequency=".12 .13" numOctaves="3" seed="31"/><feColorMatrix values="0 0 0 0 .955  0 0 0 0 .955  0 0 0 0 .94  8 0 0 0 -3.9"/></filter>
<filter id="b6"><feGaussianBlur stdDeviation="7"/></filter><filter id="b3"><feGaussianBlur stdDeviation="2.500"/></filter>
</defs>
<rect x="405" y="120" width="255" height="221" fill="#f3f3ef"/>
<g filter="url(#b6)" fill="#c6e4be"><ellipse cx="445" cy="205" rx="45" ry="50" opacity=".8"/><ellipse cx="520" cy="160" rx="55" ry="32" opacity=".8"/><ellipse cx="450" cy="300" rx="50" ry="35" opacity=".75"/><ellipse cx="640" cy="275" rx="24" ry="55" opacity=".8"/><ellipse cx="630" cy="140" rx="35" ry="20" opacity=".7"/><ellipse cx="500" cy="260" rx="20" ry="25" opacity=".5"/></g>
<rect x="405" y="120" width="255" height="221" filter="url(#fo)"/><rect x="405" y="120" width="255" height="221" filter="url(#fo2)"/><rect x="405" y="120" width="255" height="221" filter="url(#fo3)"/>
<g filter="url(#b6)" fill="#f5f5f1"><ellipse cx="560" cy="270" rx="30" ry="50" opacity=".9"/><ellipse cx="590" cy="215" rx="40" ry="14" opacity=".6"/><ellipse cx="430" cy="165" rx="16" ry="14" opacity=".7"/></g>
<g fill="none" stroke="#fae3a0" stroke-width=".9"><path d="M408 141Q406.0 139.9 415 136M408 141Q410.0 150.1 423 154M408 141Q420.5 155.1 437 160M415 136Q424.8 145.1 423 154M415 136Q432.0 145.7 437 160M453 163Q439.9 162.7 437 160M453 163Q450.4 168.4 459 181M453 163Q461.4 161.8 472 158M472 158Q471.9 149.5 480 152M472 158Q474.4 144.8 468 136M480 152Q479.5 148.8 468 136M480 152Q479.5 165.0 482 179M518 139Q524.2 139.2 530 136M518 139Q522.1 154.7 524 169M518 139Q501.4 137.3 482 125M530 136Q527.1 151.7 524 169M530 136Q508.6 127.4 482 125M474 186Q470.1 194.7 471 192M474 186Q478.3 183.1 482 179M474 186Q460.6 182.5 459 181M435 182Q431.5 183.7 426 197M435 182Q437.4 172.6 437 160M435 182Q441.7 183.0 459 181M459 181Q464.6 188.7 471 192M471 192Q470.2 200.0 473 203M473 203Q477.9 199.8 477 208M473 203Q466.7 210.6 471 214M477 208Q479.6 208.0 471 214M477 208Q473.5 201.1 471 192M519 212Q518.8 207.4 523 206M519 212Q508.8 215.9 503 223M519 212Q529.6 215.6 538 224M495 224Q497.5 226.8 503 223M495 224Q495.8 229.8 508 234M495 224Q488.8 213.7 477 208M503 223Q502.2 232.1 508 234M538 224Q538.9 218.2 546 220M538 224Q542.7 229.4 549 230M538 224Q541.2 220.9 554 222M546 220Q548.0 225.0 554 222M546 220Q546.8 229.3 549 230M554 222Q550.5 223.0 555 228M554 222Q558.3 229.1 559 227M554 222Q553.9 222.2 555 229M558 207Q551.5 214.9 554 222M558 207Q546.3 208.2 542 202M558 207Q556.1 209.7 546 220M542 202Q538.8 200.7 541 192M542 202Q545.7 214.7 546 220M570 190Q569.6 178.6 573 176M570 190Q561.5 202.0 558 207M570 190Q571.8 174.7 579 163M573 176Q575.0 168.5 579 163M573 176Q575.4 168.5 580 151M579 163Q575.4 151.1 580 151M579 163Q590.8 158.1 592 144M580 151Q591.8 146.7 592 144M608 143Q613.9 151.1 609 149M608 143Q609.2 149.4 617 150M608 143Q604.0 145.5 592 144M609 149Q613.2 147.0 617 150M609 149Q610.6 152.2 616 162M616 162Q611.3 157.1 617 150M616 162Q621.4 161.7 632 154M612 126Q604.5 139.3 608 143M612 126Q612.8 142.6 609 149M612 126Q619.3 142.8 617 150M632 192Q636.9 187.7 640 195M632 192Q641.4 185.1 645 186M632 192Q619.6 200.0 612 204M640 195Q642.8 189.5 645 186M640 195Q654.3 186.3 658 175M600 198Q604.1 198.0 612 204M600 198Q600.8 210.7 593 224M600 198Q588.4 192.2 570 190M612 204Q613.9 212.9 623 221M593 224Q606.3 210.1 612 204M593 224Q611.5 227.6 623 221M555 228Q558.7 232.4 555 229M555 228Q551.1 229.0 559 227M657 160Q661.9 162.1 658 175M657 160Q651.8 148.2 652 142M657 160Q644.8 156.1 632 154M508 234Q506.2 244.8 505 249M505 249Q487.5 245.7 482 253M505 249Q499.5 231.5 503 223M468 267Q469.8 265.7 482 253M468 267Q457.3 266.0 438 275M468 267Q463.0 282.3 458 302M419 282Q413.3 284.7 412 291M419 282Q430.3 279.5 438 275M419 282Q436.8 288.3 458 302M549 230Q549.9 225.0 555 229M549 230Q552.7 231.6 555 228M549 230Q550.1 221.0 554 222M585 264Q580.6 258.5 584 256M585 264Q579.8 264.4 572 258M585 264Q592.1 268.6 602 266M592 287Q599.0 293.7 603 302M592 287Q600.5 287.0 612 287M592 287Q599.4 275.5 602 266M612 287Q609.8 294.0 603 302M612 287Q609.4 278.4 613 269M633 248Q628.8 239.9 620 242M633 248Q638.1 252.1 645 258M633 248Q632.6 239.7 623 221M620 242Q620.0 236.3 623 221M620 242Q620.0 252.6 613 269M556 297Q553.6 295.5 552 303M556 297Q550.3 296.4 537 292M556 297Q556.6 289.5 548 275M552 303Q546.5 300.3 537 292M552 303Q543.3 302.2 533 311M533 311Q531.1 307.6 527 316M533 311Q530.7 304.8 537 292M527 316Q520.5 318.1 525 330M527 316Q527.2 308.6 537 292M471 323Q460.6 306.8 458 302M471 323Q483.6 306.0 488 298M471 323Q449.6 328.6 420 330M598 329Q593.5 331.9 581 324M598 329Q601.9 322.6 604 309M598 329Q594.9 318.7 603 302M640 330Q644.1 332.1 648 329M640 330Q640.8 337.0 651 338M640 330Q639.2 319.2 628 319M648 329Q647.4 334.3 651 338M648 329Q641.9 320.9 628 319M525 330Q525.2 317.5 533 311M525 330Q539.9 319.5 552 303M526 271Q518.2 274.9 513 282M526 271Q535.8 271.2 548 275M526 271Q530.5 276.5 537 292M471 214Q471.0 208.7 471 192M647 280Q645.0 272.0 645 258M647 280Q635.9 266.3 633 248M647 280Q632.6 285.6 612 287M438 275Q425.2 282.8 412 291M411 334Q416.7 341.3 419 339M411 334Q411.3 327.2 420 330M411 334Q414.5 317.5 412 291M645 186Q651.7 179.8 658 175M524 169Q535.1 176.7 541 192M645 258Q629.7 246.4 620 242M648 221Q636.5 218.8 623 221M648 221Q640.8 210.3 640 195M648 221Q645.9 232.1 633 248M482 179Q479.0 184.5 471 192M482 179Q474.7 181.0 459 181M482 253Q485.7 235.1 495 224M604 309Q597.8 305.3 603 302M604 309Q606.6 294.1 612 287M412 291Q414.3 308.4 420 330M437 160Q433.3 152.7 423 154M426 197Q438.4 210.8 439 225M426 197Q443.7 188.6 459 181M420 330Q423.5 338.4 419 339M542 241Q546.2 235.3 549 230M542 241Q542.6 236.8 538 224M542 241Q547.3 237.8 555 229M632 154Q630.0 151.6 617 150M632 154Q638.8 144.8 652 142M592 144Q603.1 148.6 609 149M628 319Q621.5 318.2 604 309M559 227Q553.9 224.3 555 229M602 266Q604.6 263.7 613 269M602 266Q595.5 265.3 584 256M584 256Q582.8 254.1 572 258M613 269Q606.9 275.8 592 287M523 206Q531.6 206.7 542 202M523 206Q527.0 194.1 541 192M419 339Q419.5 312.5 412 291M548 275Q540.8 284.5 537 292M488 298Q502.6 284.1 513 282M488 298Q471.0 299.2 458 302M572 258Q559.8 263.0 548 275M458 302Q449.0 294.0 438 275M513 282Q523.7 287.5 537 292M541 192Q544.9 196.8 558 207M468 136Q477.0 125.9 482 125M651 338Q644.1 333.4 628 319M652 142Q650.2 163.8 658 175M581 324Q591.0 319.8 604 309M581 324Q595.1 310.5 603 302M439 225Q457.1 221.3 471 214M439 225Q459.7 211.2 473 203M482 125Q484.1 144.0 480 152M482 125Q479.1 141.9 472 158"/></g><g fill="none" stroke="#f9dd8c" stroke-width="1.200"><path d="M405 205C430 200 450 190 470 185S500 170 520 160S540 150 560 148S590 140 612 135"/><path d="M440 120C450 140 465 150 480 155S510 150 528 138"/><path d="M405 300C430 290 450 280 470 268S500 250 506 233"/><path d="M524 272C540 280 550 286 556 292S565 310 570 320"/><path d="M556 292C570 292 580 290 592 287S630 280 660 275"/><path d="M592 245C610 245 630 240 660 238"/><path d="M470 215C468 235 466 250 468 267S460 300 450 320"/><path d="M405 240C420 245 440 250 468 267"/><path d="M570 320C580 318 590 315 600 310"/><path d="M541 160C560 165 575 170 590 175S620 180 660 170"/><path d="M556 230C556 250 556 270 556 292"/><path d="M572 222C574 240 576 260 580 282"/><path d="M620 250C625 270 628 300 630 341"/><path d="M480 280C490 300 500 320 520 318"/><path d="M420 320C440 315 460 318 471 323"/></g>
<g fill="none" stroke="#f8d26a" stroke-width="2.200" stroke-linecap="round"><path d="M524 120C530 135 536 148 541 160S548 190 556 203S575 212 592 214S630 222 660 236"/><path d="M612 120C606 135 600 150 598 165S594 195 592 212S594 250 592 270S588 320 590 341"/><path d="M405 132C420 145 432 160 438 180S452 205 470 215S495 225 506 233S520 260 524 270S515 300 505 315S495 335 494 341"/><path d="M506 233C515 228 525 226 535 226S560 226 572 222S585 216 592 213"/><path d="M548 205C560 206 572 207 592 206"/><path d="M535 226C533 245 528 262 524 272S500 298 485 310S455 332 440 341"/><path d="M592 250C584 265 580 280 580 295S582 325 585 341"/><path d="M405 341C430 330 470 322 520 318S580 312 612 306S645 300 660 296"/><path d="M622 120C628 140 636 158 642 170S655 195 660 205"/><path d="M405 163C415 170 425 180 430 195S428 225 425 232S412 250 405 262"/><path d="M556 203C548 215 540 222 535 226"/><path d="M592 212C605 205 620 200 640 197S655 196 660 195"/><path d="M470 120C472 130 470 140 462 150S445 170 438 180"/></g>
<g filter="url(#b3)" fill="#6f9fc4" opacity=".6"><ellipse cx="590" cy="208" rx="22" ry="10" transform="rotate(-22 590 208)"/><ellipse cx="603" cy="196" rx="15" ry="11"/><ellipse cx="583" cy="213" rx="10" ry="6"/><ellipse cx="571" cy="321" rx="10" ry="15"/><ellipse cx="577" cy="336" rx="11" ry="9"/></g>
<circle cx="408" cy="141" r="2.9" fill="#cfe6ee" fill-opacity=".6" stroke="#63a8c9" stroke-width="1" stroke-opacity=".75"/><circle cx="415" cy="136" r="2.9" fill="#cfe6ee" fill-opacity=".6" stroke="#63a8c9" stroke-width="1" stroke-opacity=".75"/><circle cx="453" cy="163" r="2.9" fill="#cfe6ee" fill-opacity=".6" stroke="#63a8c9" stroke-width="1" stroke-opacity=".75"/><circle cx="472" cy="158" r="2.9" fill="#cfe6ee" fill-opacity=".6" stroke="#63a8c9" stroke-width="1" stroke-opacity=".75"/><circle cx="480" cy="152" r="2.9" fill="#cfe6ee" fill-opacity=".6" stroke="#63a8c9" stroke-width="1" stroke-opacity=".75"/><circle cx="518" cy="139" r="2.9" fill="#cfe6ee" fill-opacity=".6" stroke="#63a8c9" stroke-width="1" stroke-opacity=".75"/><circle cx="530" cy="136" r="2.9" fill="#cfe6ee" fill-opacity=".6" stroke="#63a8c9" stroke-width="1" stroke-opacity=".75"/><circle cx="474" cy="186" r="2.9" fill="#cfe6ee" fill-opacity=".6" stroke="#63a8c9" stroke-width="1" stroke-opacity=".75"/><circle cx="435" cy="182" r="2.9" fill="#cfe6ee" fill-opacity=".6" stroke="#63a8c9" stroke-width="1" stroke-opacity=".75"/><circle cx="459" cy="181" r="2.9" fill="#cfe6ee" fill-opacity=".6" stroke="#63a8c9" stroke-width="1" stroke-opacity=".75"/><circle cx="471" cy="192" r="2.9" fill="#cfe6ee" fill-opacity=".6" stroke="#63a8c9" stroke-width="1" stroke-opacity=".75"/><circle cx="473" cy="203" r="2.9" fill="#cfe6ee" fill-opacity=".6" stroke="#63a8c9" stroke-width="1" stroke-opacity=".75"/><circle cx="477" cy="208" r="2.9" fill="#cfe6ee" fill-opacity=".6" stroke="#63a8c9" stroke-width="1" stroke-opacity=".75"/><circle cx="519" cy="212" r="2.9" fill="#cfe6ee" fill-opacity=".6" stroke="#63a8c9" stroke-width="1" stroke-opacity=".75"/><circle cx="495" cy="224" r="2.9" fill="#cfe6ee" fill-opacity=".6" stroke="#63a8c9" stroke-width="1" stroke-opacity=".75"/><circle cx="503" cy="223" r="2.9" fill="#cfe6ee" fill-opacity=".6" stroke="#63a8c9" stroke-width="1" stroke-opacity=".75"/><circle cx="538" cy="224" r="2.9" fill="#cfe6ee" fill-opacity=".6" stroke="#63a8c9" stroke-width="1" stroke-opacity=".75"/><circle cx="546" cy="220" r="2.9" fill="#cfe6ee" fill-opacity=".6" stroke="#63a8c9" stroke-width="1" stroke-opacity=".75"/><circle cx="554" cy="222" r="2.9" fill="#cfe6ee" fill-opacity=".6" stroke="#63a8c9" stroke-width="1" stroke-opacity=".75"/><circle cx="558" cy="207" r="2.9" fill="#cfe6ee" fill-opacity=".6" stroke="#63a8c9" stroke-width="1" stroke-opacity=".75"/><circle cx="542" cy="202" r="2.9" fill="#cfe6ee" fill-opacity=".6" stroke="#63a8c9" stroke-width="1" stroke-opacity=".75"/><circle cx="570" cy="190" r="2.9" fill="#cfe6ee" fill-opacity=".6" stroke="#63a8c9" stroke-width="1" stroke-opacity=".75"/><circle cx="573" cy="176" r="2.9" fill="#cfe6ee" fill-opacity=".6" stroke="#63a8c9" stroke-width="1" stroke-opacity=".75"/><circle cx="579" cy="163" r="2.9" fill="#cfe6ee" fill-opacity=".6" stroke="#63a8c9" stroke-width="1" stroke-opacity=".75"/><circle cx="580" cy="151" r="2.9" fill="#cfe6ee" fill-opacity=".6" stroke="#63a8c9" stroke-width="1" stroke-opacity=".75"/><circle cx="608" cy="143" r="2.9" fill="#cfe6ee" fill-opacity=".6" stroke="#63a8c9" stroke-width="1" stroke-opacity=".75"/><circle cx="609" cy="149" r="2.9" fill="#cfe6ee" fill-opacity=".6" stroke="#63a8c9" stroke-width="1" stroke-opacity=".75"/><circle cx="616" cy="162" r="2.9" fill="#cfe6ee" fill-opacity=".6" stroke="#63a8c9" stroke-width="1" stroke-opacity=".75"/><circle cx="612" cy="126" r="2.9" fill="#cfe6ee" fill-opacity=".6" stroke="#63a8c9" stroke-width="1" stroke-opacity=".75"/><circle cx="632" cy="192" r="2.9" fill="#cfe6ee" fill-opacity=".6" stroke="#63a8c9" stroke-width="1" stroke-opacity=".75"/><circle cx="640" cy="195" r="2.9" fill="#cfe6ee" fill-opacity=".6" stroke="#63a8c9" stroke-width="1" stroke-opacity=".75"/><circle cx="600" cy="198" r="2.9" fill="#cfe6ee" fill-opacity=".6" stroke="#63a8c9" stroke-width="1" stroke-opacity=".75"/><circle cx="612" cy="204" r="2.9" fill="#cfe6ee" fill-opacity=".6" stroke="#63a8c9" stroke-width="1" stroke-opacity=".75"/><circle cx="593" cy="224" r="2.9" fill="#cfe6ee" fill-opacity=".6" stroke="#63a8c9" stroke-width="1" stroke-opacity=".75"/><circle cx="555" cy="228" r="2.9" fill="#cfe6ee" fill-opacity=".6" stroke="#63a8c9" stroke-width="1" stroke-opacity=".75"/><circle cx="657" cy="160" r="2.9" fill="#cfe6ee" fill-opacity=".6" stroke="#63a8c9" stroke-width="1" stroke-opacity=".75"/><circle cx="508" cy="234" r="2.9" fill="#cfe6ee" fill-opacity=".6" stroke="#63a8c9" stroke-width="1" stroke-opacity=".75"/><circle cx="505" cy="249" r="2.9" fill="#cfe6ee" fill-opacity=".6" stroke="#63a8c9" stroke-width="1" stroke-opacity=".75"/><circle cx="468" cy="267" r="2.9" fill="#cfe6ee" fill-opacity=".6" stroke="#63a8c9" stroke-width="1" stroke-opacity=".75"/><circle cx="419" cy="282" r="2.9" fill="#cfe6ee" fill-opacity=".6" stroke="#63a8c9" stroke-width="1" stroke-opacity=".75"/><circle cx="549" cy="230" r="2.9" fill="#cfe6ee" fill-opacity=".6" stroke="#63a8c9" stroke-width="1" stroke-opacity=".75"/><circle cx="585" cy="264" r="2.9" fill="#cfe6ee" fill-opacity=".6" stroke="#63a8c9" stroke-width="1" stroke-opacity=".75"/><circle cx="592" cy="287" r="2.9" fill="#cfe6ee" fill-opacity=".6" stroke="#63a8c9" stroke-width="1" stroke-opacity=".75"/><circle cx="612" cy="287" r="2.9" fill="#cfe6ee" fill-opacity=".6" stroke="#63a8c9" stroke-width="1" stroke-opacity=".75"/><circle cx="633" cy="248" r="2.9" fill="#cfe6ee" fill-opacity=".6" stroke="#63a8c9" stroke-width="1" stroke-opacity=".75"/><circle cx="620" cy="242" r="2.9" fill="#cfe6ee" fill-opacity=".6" stroke="#63a8c9" stroke-width="1" stroke-opacity=".75"/><circle cx="556" cy="297" r="2.9" fill="#cfe6ee" fill-opacity=".6" stroke="#63a8c9" stroke-width="1" stroke-opacity=".75"/><circle cx="552" cy="303" r="2.9" fill="#cfe6ee" fill-opacity=".6" stroke="#63a8c9" stroke-width="1" stroke-opacity=".75"/><circle cx="533" cy="311" r="2.9" fill="#cfe6ee" fill-opacity=".6" stroke="#63a8c9" stroke-width="1" stroke-opacity=".75"/><circle cx="527" cy="316" r="2.9" fill="#cfe6ee" fill-opacity=".6" stroke="#63a8c9" stroke-width="1" stroke-opacity=".75"/><circle cx="471" cy="323" r="2.9" fill="#cfe6ee" fill-opacity=".6" stroke="#63a8c9" stroke-width="1" stroke-opacity=".75"/><circle cx="598" cy="329" r="2.9" fill="#cfe6ee" fill-opacity=".6" stroke="#63a8c9" stroke-width="1" stroke-opacity=".75"/><circle cx="640" cy="330" r="2.9" fill="#cfe6ee" fill-opacity=".6" stroke="#63a8c9" stroke-width="1" stroke-opacity=".75"/><circle cx="648" cy="329" r="2.9" fill="#cfe6ee" fill-opacity=".6" stroke="#63a8c9" stroke-width="1" stroke-opacity=".75"/><circle cx="525" cy="330" r="2.9" fill="#cfe6ee" fill-opacity=".6" stroke="#63a8c9" stroke-width="1" stroke-opacity=".75"/>
<path d="M535.5 156.9h11l1.5 3.600-1.500 3.600h-11l-1.500-3.600z" fill="#3a76c9"/><text x="541" y="163.0" text-anchor="middle" font-size="6.500" font-weight="bold" fill="#fff">3</text><path d="M595.0 143.9h11l1.5 3.600-1.500 3.600h-11l-1.500-3.600z" fill="#3a76c9"/><text x="600.5" y="150.0" text-anchor="middle" font-size="6.500" font-weight="bold" fill="#fff">5</text><path d="M631.5 156.9h12l1.5 3.600-1.500 3.600h-12l-1.500-3.600z" fill="#3a76c9"/><text x="637.5" y="163.0" text-anchor="middle" font-size="6.500" font-weight="bold" fill="#fff">45</text><path d="M563.5 203.9h12l1.5 3.600-1.500 3.600h-12l-1.500-3.600z" fill="#3a76c9"/><text x="569.5" y="210.0" text-anchor="middle" font-size="6.500" font-weight="bold" fill="#fff">66</text><path d="M511.0 218.9h12l1.5 3.600-1.500 3.600h-12l-1.500-3.600z" fill="#3a76c9"/><text x="517" y="225.0" text-anchor="middle" font-size="6.500" font-weight="bold" fill="#fff">60</text><path d="M517.0 264.9h12l1.5 3.600-1.500 3.600h-12l-1.500-3.600z" fill="#3a76c9"/><text x="523" y="271.0" text-anchor="middle" font-size="6.500" font-weight="bold" fill="#fff">61</text><path d="M513.0 274.9h12l1.5 3.600-1.500 3.600h-12l-1.500-3.600z" fill="#3a76c9"/><text x="519" y="281.0" text-anchor="middle" font-size="6.500" font-weight="bold" fill="#fff">63</text><path d="M575.0 277.9h12l1.5 3.600-1.500 3.600h-12l-1.500-3.600z" fill="#3a76c9"/><text x="581" y="284.0" text-anchor="middle" font-size="6.500" font-weight="bold" fill="#fff">67</text><path d="M514.5 314.9h11l1.5 3.600-1.500 3.600h-11l-1.500-3.600z" fill="#3a76c9"/><text x="520" y="321.0" text-anchor="middle" font-size="6.500" font-weight="bold" fill="#fff">6</text><path d="M399.5 161.4h9l1.5 3.600-1.500 3.600h-9l-1.500-3.600z" fill="#3a76c9"/><text x="404" y="167.5" text-anchor="middle" font-size="6.500" font-weight="bold" fill="#fff">8</text>
<rect x="419.500" y="228" width="14" height="7.500" rx="1" fill="#6a9a3c"/><text x="426.500" y="234.300" text-anchor="middle" font-size="6.200" font-weight="bold" fill="#fff">E42</text>
<text x="410.500" y="335" font-size="13.800" letter-spacing="-.2" stroke-width=".45"><tspan fill="#4285f4" stroke="#4285f4">G</tspan><tspan fill="#ea4335" stroke="#ea4335">o</tspan><tspan fill="#fbbc05" stroke="#fbbc05">o</tspan><tspan fill="#4285f4" stroke="#4285f4">g</tspan><tspan fill="#34a853" stroke="#34a853">l</tspan><tspan fill="#ea4335" stroke="#ea4335">e</tspan></text><text x="418" y="125" font-size="8.6" font-weight="normal" fill="#444" text-anchor="start" stroke="#fff" stroke-width="1.800" stroke-opacity=".8" paint-order="stroke" stroke-linejoin="round">Neuwied</text><text x="405" y="145" font-size="8.6" font-weight="normal" fill="#444" text-anchor="start" stroke="#fff" stroke-width="1.800" stroke-opacity=".8" paint-order="stroke" stroke-linejoin="round">ye</text><text x="405" y="186" font-size="8.6" font-weight="normal" fill="#444" text-anchor="start" stroke="#fff" stroke-width="1.800" stroke-opacity=".8" paint-order="stroke" stroke-linejoin="round">m</text><text x="404" y="235" font-size="8" font-weight="normal" fill="#444" text-anchor="start" stroke="#fff" stroke-width="1.800" stroke-opacity=".8" paint-order="stroke" stroke-linejoin="round">es</text><text x="600" y="182" font-size="10.5" font-weight="bold" fill="#333" text-anchor="middle" stroke="#fff" stroke-width="1.800" stroke-opacity=".8" paint-order="stroke" stroke-linejoin="round">Frankfurt</text><text x="600" y="194" font-size="10.5" font-weight="bold" fill="#333" text-anchor="middle" stroke="#fff" stroke-width="1.800" stroke-opacity=".8" paint-order="stroke" stroke-linejoin="round">am Main</text><text x="541" y="200" font-size="8.8" font-weight="normal" fill="#333" text-anchor="middle" stroke="#fff" stroke-width="1.800" stroke-opacity=".8" paint-order="stroke" stroke-linejoin="round">Wiesbaden</text><text x="637" y="198" font-size="8.8" font-weight="normal" fill="#444" text-anchor="start" stroke="#fff" stroke-width="1.800" stroke-opacity=".8" paint-order="stroke" stroke-linejoin="round">Hana</text><text x="548" y="218" font-size="9" font-weight="normal" fill="#444" text-anchor="start" stroke="#fff" stroke-width="1.800" stroke-opacity=".8" paint-order="stroke" stroke-linejoin="round">ainz</text><text x="614" y="211.5" font-size="8.8" font-weight="normal" fill="#444" text-anchor="middle" stroke="#fff" stroke-width="1.800" stroke-opacity=".8" paint-order="stroke" stroke-linejoin="round">Offenbach</text><text x="612" y="222" font-size="8.8" font-weight="normal" fill="#444" text-anchor="middle" stroke="#fff" stroke-width="1.800" stroke-opacity=".8" paint-order="stroke" stroke-linejoin="round">am Main</text><text x="628" y="236" font-size="8.8" font-weight="normal" fill="#444" text-anchor="start" stroke="#fff" stroke-width="1.800" stroke-opacity=".8" paint-order="stroke" stroke-linejoin="round">Aschaf</text><text x="500" y="237.5" font-size="8.2" font-weight="normal" fill="#666" text-anchor="middle" stroke="#fff" stroke-width="1.800" stroke-opacity=".8" paint-order="stroke" stroke-linejoin="round">Bingen</text><text x="496" y="246.5" font-size="8.2" font-weight="normal" fill="#666" text-anchor="middle" stroke="#fff" stroke-width="1.800" stroke-opacity=".8" paint-order="stroke" stroke-linejoin="round">am Rhein</text><text x="595" y="243.5" font-size="9" font-weight="normal" fill="#333" text-anchor="middle" stroke="#fff" stroke-width="1.800" stroke-opacity=".8" paint-order="stroke" stroke-linejoin="round">Darmstadt</text><text x="405" y="277" font-size="8.8" font-weight="normal" fill="#444" text-anchor="start" stroke="#fff" stroke-width="1.800" stroke-opacity=".8" paint-order="stroke" stroke-linejoin="round">Oberstein</text><text x="555" y="293" font-size="9" font-weight="normal" fill="#333" text-anchor="middle" stroke="#fff" stroke-width="1.800" stroke-opacity=".8" paint-order="stroke" stroke-linejoin="round">Worms</text><text x="570" y="323" font-size="9.3" font-weight="normal" fill="#333" text-anchor="middle" stroke="#fff" stroke-width="1.800" stroke-opacity=".8" paint-order="stroke" stroke-linejoin="round">Mannheim</text><text x="449" y="333" font-size="8.8" font-weight="normal" fill="#444" text-anchor="start" stroke="#fff" stroke-width="1.800" stroke-opacity=".8" paint-order="stroke" stroke-linejoin="round">iserslautern</text>
<circle cx="596" cy="245.500" r="1.500" fill="#fff" stroke="#444" stroke-width=".8"/><circle cx="617" cy="201" r="1.300" fill="#fff" stroke="#444" stroke-width=".8"/><circle cx="421" cy="279.500" r="1.300" fill="#fff" stroke="#444" stroke-width=".8"/>
<path d="M533 225.500c-1.500-7-8.500-10-8.500-17a8.500 8.500 0 0 1 17 0c0 7-7 10-8.500 17z" fill="#ea4335"/><circle cx="533" cy="208" r="3" fill="#8b1a12"/>
<rect x="413" y="127.800" width="68" height="20.800" rx="1.500" fill="#fff"/><rect x="443" y="127.800" width=".7" height="20.800" fill="#e6e6e6"/>
<text x="419.200" y="141.500" font-size="8.500" font-weight="bold" fill="#222">Karte</text><text x="450.200" y="141.500" font-size="8.800" fill="#6b6b6b">Satellit</text>
<rect x="488.500" y="120.500" width="94.500" height="13" fill="#fff" stroke="#8f8f8f" stroke-width=".8"/><text x="490.500" y="130.200" font-size="8.500" fill="#777">Enter a location</text>
<rect x="631" y="128" width="18.500" height="18.500" rx="1.500" fill="#fff"/><path d="M634.700 135v-3.400h3.300M642.300 131.600h3.300v3.400M645.600 138.800v3.400h-3.300M638 142.200h-3.300v-3.400" fill="none" stroke="#555" stroke-width="1.500"/>
<rect x="632" y="282.200" width="20" height="40.600" rx="1.500" fill="#fff"/><rect x="634.500" y="302.300" width="15" height=".7" fill="#e6e6e6"/>
<path d="M638.500 292.300h7M642 288.800v7M638.500 312.800h7" stroke="#666" stroke-width="1.500"/>
<rect x="419" y="331" width="241" height="10" fill="#f5f5f5" fill-opacity=".72"/>

<g font-size="6.800" fill="#555"><text x="420.500" y="338.800">Kartendaten</text><text x="469.500" y="338.800">Nutzungsbedingungen</text><text x="552" y="338.800">Fehler bei Google Maps melden</text></g>
</svg><svg class="abs" style="left:660px;top:120px" width="422" height="221" viewBox="660 120 422 221" font-family="Liberation Sans,sans-serif">
<defs>
<linearGradient id="sky" x1="0" y1="0" x2="0" y2="1"><stop offset="0" stop-color="#2f6fc0"/><stop offset=".24" stop-color="#5990d6"/><stop offset=".46" stop-color="#8db3e2"/><stop offset=".66" stop-color="#b7cce9"/><stop offset="1" stop-color="#cddbed"/></linearGradient>
<radialGradient id="skyl" cx=".02" cy=".2" r=".5"><stop offset="0" stop-color="#8fb3e4" stop-opacity=".85"/><stop offset="1" stop-color="#8fb3e4" stop-opacity="0"/></radialGradient>
<radialGradient id="skyd" cx=".55" cy="0" r=".45"><stop offset="0" stop-color="#1f5aa9" stop-opacity=".5"/><stop offset="1" stop-color="#1f5aa9" stop-opacity="0"/></radialGradient>
<linearGradient id="trg" x1="0" y1="0" x2="1" y2="0"><stop offset="0" stop-color="#624d3c"/><stop offset=".42" stop-color="#6a5442"/><stop offset=".62" stop-color="#937e6a"/><stop offset="1" stop-color="#98836f"/></linearGradient><linearGradient id="fld" x1="0" y1="0" x2="1" y2="0"><stop offset="0" stop-color="#96835a"/><stop offset=".45" stop-color="#96835a"/><stop offset=".6" stop-color="#a39d69"/><stop offset="1" stop-color="#a39d69"/></linearGradient><linearGradient id="gr" x1="0" y1="0" x2="0" y2="1"><stop offset="0" stop-color="#9a8d5e"/><stop offset=".35" stop-color="#a09a66"/><stop offset="1" stop-color="#aaa474"/></linearGradient>
<filter id="tx" x="0" y="0" width="100%" height="100%" color-interpolation-filters="sRGB"><feTurbulence type="fractalNoise" baseFrequency=".12 .3" numOctaves="3" seed="4"/><feColorMatrix values="0 0 0 0 .12  0 0 0 0 .09  0 0 0 0 .04  -3 0 0 0 1.550"/></filter>
<filter id="tw" x="0" y="0" width="100%" height="100%" color-interpolation-filters="sRGB"><feTurbulence type="fractalNoise" baseFrequency=".1 .25" numOctaves="3" seed="21"/><feColorMatrix values="0 0 0 0 .95  0 0 0 0 .92  0 0 0 0 .8  -3 0 0 0 1.450"/></filter>
<filter id="s4"><feGaussianBlur stdDeviation="4"/></filter><filter id="s3"><feGaussianBlur stdDeviation="2.500"/></filter><filter id="s2"><feGaussianBlur stdDeviation="1.600"/></filter><filter id="s1"><feGaussianBlur stdDeviation=".7"/></filter>
<clipPath id="svc"><rect x="660" y="120" width="422" height="221"/></clipPath>
</defs>
<g clip-path="url(#svc)">
<rect x="660" y="120" width="422" height="85" fill="url(#sky)"/><rect x="660" y="120" width="422" height="85" fill="url(#skyd)"/><rect x="660" y="120" width="422" height="85" fill="url(#skyl)"/>
<g fill="#fff" filter="url(#s1)" opacity=".75"><ellipse cx="997" cy="143" rx="5" ry="3.200"/><ellipse cx="841" cy="192" rx="4" ry="1.600"/><ellipse cx="891" cy="191" rx="3.200" ry="1.400"/><ellipse cx="666" cy="184" rx="4" ry="1.600"/></g>
<rect x="660" y="228" width="422" height="113" fill="url(#gr)"/>
<path d="M655 250L655.0 191.8 658.6 190.3 662.6 190.1 666.7 193.9 669.6 188.1 672.9 187.9 675.0 190.3 677.4 189.6 680.6 192.6 682.9 192.0 686.9 190.7 689.1 191.3 691.2 193.3 693.3 197.8 697.2 198.1 699.5 194.4 703.4 198.7 707.5 197.0 710.9 198.9 715.0 195.9 719.1 194.5 721.6 197.6 723.8 198.8 725.8 197.8 729.0 199.5 732.5 197.2 735.0 194.1 738.0 196.8 740.9 194.2 742.9 192.4 744.7 193.5 748.5 197.5 752.2 195.1 755.4 196.9 757.3 195.7 761.4 195.4 765.0 191.2 769.1 194.9 771.8 193.9 775.4 196.6 779.0 192.7 782.9 197.4 786.9 197.3 789.6 194.3 793.6 196.1 797.6 195.1 800.1 196.6 802.4 198.3 804.5 194.8 808.7 198.4 810.6 193.6 813.7 197.4 816.1 196.5 819.9 197.8 822.7 200.4 826.7 201.0 829.7 196.4 831.8 197.1 835.8 197.5 839.5 200.5 842.4 200.2 846.2 199.2 849.1 194.9 852.9 194.9 855.8 197.7 859.4 197.6 861.9 198.3 864.0 198.7 868.2 195.7 871.5 198.9 874.1 201.7 876.6 197.8 880.5 200.8 884.1 198.7 887.6 199.4 891.2 201.0 894.7 201.3 897.7 198.2 901.1 200.8 905.2 198.4 908.4 202.1 911.5 200.5 914.9 199.0 918.7 197.7 922.4 199.4 925.8 196.9 929.5 199.2 933.4 195.9 936.8 195.2 940.9 197.9 944.0 199.9 947.8 195.2 950.7 196.6 954.3 196.3 956.5 195.9 959.7 196.5 962.5 196.7 966.1 196.5 969.7 200.1 971.9 197.6 975.2 198.8 978.7 196.2 980.6 197.2 982.9 199.6 985.0 198.0 987.3 198.7 989.1 197.0 991.9 196.0 995.1 198.2 999.0 199.5 1001.8 197.7 1004.6 198.6 1008.4 196.8 1010.3 195.3 1012.3 195.6 1014.9 195.3 1019.0 193.6 1021.8 193.5 1025.2 196.0 1027.3 194.6 1030.5 192.2 1034.6 194.1 1037.2 192.3 1039.0 196.9 1042.2 193.5 1044.3 193.2 1048.3 194.3 1051.1 194.8 1053.6 190.0 1056.3 189.8 1060.3 191.5 1062.7 188.9 1065.7 191.9 1068.3 188.3 1071.3 192.3 1074.2 193.0 1077.5 190.8 1080.0 188.6 1083.8 192.9 1086.9 191.1 L1090 250z" fill="#75604e" filter="url(#s1)"/>
<g filter="url(#s2)"><path d="M650 203H1090V241L885 239 870 233H650z" fill="url(#trg)"/><ellipse cx="1076" cy="222" rx="12" ry="24" fill="#5a4433"/><ellipse cx="690" cy="210" rx="32" ry="15" fill="#5b4636"/><ellipse cx="800" cy="222" rx="40" ry="10" fill="#7a6650"/></g>
<path d="M988.8 201.2l-1.0 35.8M1075.3 195.5l-0.1 46.6M931.6 205.5l-1.1 30.6M979.8 201.9l-0.5 39.1M786.1 201.5l-0.4 40.4M973.4 204.4l-0.7 29.2M852.4 207.6l0.1 30.7M668.1 199.7l0.2 31.8M958.0 205.1l1.2 27.1M823.1 203.4l-0.9 34.3M785.9 203.9l1.0 32.1M952.4 203.7l0.8 25.6M1042.7 197.8l0.1 42.4M870.0 203.8l0.3 23.5M1001.3 199.5l1.0 37.0M993.0 204.5l0.7 28.9M1071.1 201.5l-1.4 42.0M1014.0 200.1l1.4 42.6M959.8 201.1l1.3 28.3M724.6 202.5l0.4 24.9M680.2 192.9l-1.3 37.7M686.1 199.0l1.1 37.1M793.5 202.5l1.3 39.9M818.4 200.3l-1.0 45.2M925.9 204.9l0.2 33.8M921.5 203.1l-0.7 30.2M975.7 203.7l-0.8 31.3M817.2 205.6l0.6 32.1M935.8 201.3l-1.2 33.7M761.7 199.9l0.9 29.9M674.3 198.5l-1.0 27.3M1060.0 200.1l-1.2 36.3M1068.6 199.0l-1.1 46.3M923.2 203.8l-0.5 24.8M918.6 203.9l-1.1 26.9M1009.4 203.7l-0.2 41.4M1018.0 202.2l0.2 39.6M971.4 202.9l-1.4 31.6M1033.7 201.2l-1.5 43.2M858.5 207.2l-0.2 27.1M856.6 200.9l-1.0 26.4M818.6 202.9l-1.0 45.3M768.2 198.6l-0.6 28.8M675.4 199.9l1.3 30.6M949.5 205.7l1.3 26.4M711.3 202.0l0.7 33.2M672.4 194.8l-0.3 31.4M1069.0 196.6l-0.1 41.1M780.4 202.9l-1.0 42.9M762.5 203.7l-0.2 31.0M1069.7 193.7l0.8 40.2M833.5 201.2l1.5 32.0M878.9 205.1l-1.3 21.3M1037.7 201.0l-1.3 46.0M828.1 201.3l-0.3 27.5M789.9 197.9l1.4 37.7M830.2 205.2l-0.6 21.0M1047.1 200.9l-0.9 44.9M669.3 197.6l0.2 34.7M819.4 204.9l1.2 40.9M790.6 201.1l-0.8 46.3" stroke="#f0eae0" stroke-width="1" opacity=".62" fill="none" filter="url(#s1)"/>
<g filter="url(#s3)">
<path d="M650 233L885 236 1090 240 1090 280 885 290 885 262 650 256z" fill="url(#fld)"/>
<path d="M650 253C720 250 790 256 830 252S870 244 884 250L890 285 800 296 650 298z" fill="#574131"/>
<path d="M650 290L805 290 770 315 715 345 650 345z" fill="#64533a"/>
<path d="M890 280L805 296 725 345 905 345z" fill="#aea878"/>
<path d="M1090 266L1005 274 968 296 945 345 1090 345z" fill="#d0c6ae"/>
<path d="M890 300L960 290 950 345 890 345z" fill="#b0a67e"/>
<ellipse cx="1079" cy="270" rx="9" ry="13" fill="#6a4e3a"/>
</g>
<path d="M897 231c-6 4-16 8-24 14s-12 9-6 13" fill="none" stroke="#6f5f44" stroke-width="2.200" filter="url(#s1)"/>
<path d="M905 228c-4 3-10 5-14 9" fill="none" stroke="#c4b890" stroke-width="1.600" filter="url(#s1)"/>
<ellipse cx="944" cy="245.500" rx="15" ry="13.500" fill="#5e3d32" filter="url(#s2)"/>
<rect x="660" y="196" width="422" height="145" filter="url(#tx)" opacity=".3"/>
<rect x="660" y="232" width="422" height="109" filter="url(#tw)" opacity=".22"/>
<path d="M890 329l6 10 92-44-4-13z" fill="#726a60" filter="url(#s1)"/><path d="M892 329l91-45" stroke="#a49e92" stroke-width="2.200" opacity=".85"/>
<path d="M925 290l32 1 10-7-20-6z" fill="#2e2a22" opacity=".55" filter="url(#s2)"/>
<g fill="#b5652f" filter="url(#s1)"><path d="M897 257C905 251 920 252 931 257C938 261 941 269 941.500 277L944 291C945 298 941 303 936.500 302C932.500 301 931 296 932 290L930 281C926 280.500 920 278.500 916 277.500L906 277z"/>
<path d="M897 257C892.500 265 892.500 276 895.500 284L894.500 292 898.500 293.500 900 284C902 278 906 276 907 275z"/><path d="M903 272L905 285 903 294 907 295.500 909 285 911.500 276z"/><path d="M924.500 275L926 290 925 302 929 303.500 931 290 932.500 278z"/>
<path d="M897.500 257C893 261 891.500 270 893.500 279" fill="none" stroke="#b5652f" stroke-width="1.800"/></g>
<path d="M905 256c8-3 18-2 26 2" fill="none" stroke="#cf8048" stroke-width="1.500" opacity=".7" filter="url(#s1)"/>
<path d="M931 281.500c3 2 7 2.500 10.500 1" stroke="#5a2716" stroke-width="1.300" fill="none"/>
</g>
<rect x="660" y="127.800" width="143" height="32" rx="1.500" fill="#222" fill-opacity=".85"/>
<text x="665.300" y="141" font-size="8.300" font-weight="bold" fill="#fff">Nike-Stellung Wackernheim</text>
<text x="665.300" y="163" font-size="8" fill="#5b8fd8" opacity=".75">In Google Maps ansehen</text><rect x="664" y="159.800" width="120" height="1" fill="#7fa7dc" opacity=".5"/>
<rect x="782" y="128" width=".8" height="40" fill="#555"/>
<path d="M792.300 154.500c-1.200-4.600-4.700-6-4.700-9.500a4.700 4.700 0 0 1 9.400 0c0 3.500-3.500 4.900-4.700 9.500z" fill="#cfcfcf"/><circle cx="792.300" cy="145" r="1.700" fill="#333"/>
<rect x="1049.400" y="127.800" width="17.800" height="18.200" rx="1.500" fill="#fff"/><path d="M1053 134.700v-3.200h3.200M1060.600 131.500h3.200v3.200M1063.800 139.300v3.200h-3.200M1056.200 142.500h-3.200v-3.200" fill="none" stroke="#444" stroke-width="1.500"/>
<circle cx="1056.700" cy="257" r="17.500" fill="#222" fill-opacity=".88"/><circle cx="1056.700" cy="257" r="11" fill="#3a3a3a"/>
<path d="M1063.500 248.500l-9.500 5.500 5.500 5.500z" fill="#e53935"/><path d="M1050 265.500l4-11.500 5.500 5.500z" fill="#e0e0e0"/>
<path d="M1045.500 250c-2.500 4-2.500 10 0 14M1068 250c2.500 4 2.500 10 0 14" fill="none" stroke="#aaa" stroke-width="1.200"/><path d="M1043.800 262.500l2 2.800 1.700-3zM1069.700 262.500l-2 2.800-1.700-3z" fill="#aaa"/>
<rect x="1046.800" y="282.700" width="20.300" height="40.300" rx="1.500" fill="#222" fill-opacity=".88"/><rect x="1050" y="302.600" width="14" height=".7" fill="#555"/>
<path d="M1053.500 292.700h7M1057 289.200v7M1053.500 312.900h7" stroke="#ccc" stroke-width="1.600"/>
<g fill="#222" fill-opacity=".8"><rect x="879" y="330.500" width="59.500" height="10.500"/><rect x="939.500" y="330.500" width="77.500" height="10.500"/><rect x="1018" y="330.500" width="64" height="10.500"/></g>
<g font-size="6.900" fill="#fff"><text x="883" y="338.500">© Thomas Ruta</text><text x="942.500" y="338.500">Nutzungsbedingungen</text><text x="1021.500" y="338.500">Problem melden</text></g>
<text x="663.500" y="336" font-size="14.500" fill="#fff" letter-spacing="-.3">Google</text>
</svg><div id="form" class="abs"><div class="fl" style="top:131.5px">Position</div><div class="fi" style="top:124px;height:25.6px">(49.9553939, 8.176763899</div><div class="fl" style="top:156.5px">POV</div><div class="fl" style="top:178.5px">Heading</div><div class="fi" style="top:159.3px;height:26.3px">316.9381801604435</div><div class="fl" style="top:202.5px">POV Pitch</div><div class="fi" style="top:195.1px;height:25.7px">-4.900805876155275</div><div class="fl" style="top:229.3px">Pano ID</div><div class="fi" style="top:221.9px;height:25.5px">CAoSLEFGMVFpcE81M3hTYj</div><div class="fl" style="top:256px">Zoom</div><div class="fi" style="top:248.5px;height:25.6px">1</div><div class="fb" style="left:1089.100px;width:30.200px">save</div><div class="fb" style="left:1121px;width:27.800px">new</div></div><table id="t1" class="abs"><colgroup><col style="width:40.100px"><col style="width:377.100px"><col style="width:56.800px"><col style="width:114.200px"><col style="width:40.800px"><col style="width:114.200px"><col style="width:42.100px"><col style="width:20.700px"><col style="width:60px"></colgroup><tr class=""><th>Pano ID</th><td>CAoSLEFGMVFpcE81M3hTYjRraldGMlJYNGJSOGdhYm1WTUV0VnoxR0tkdHMtMEpx</td><th>POV Heading</th><td>316.9381801604435</td><th>POV Pitch</th><td>-4.900805876155275</td><th>zoom</th><td>1</td><th>Position</th></tr><tr class=""><th>Pano ID</th><td>0yfJCnICQIUAAAQIt--IJw</td><th>POV Heading</th><td>50.930805283279916</td><th>POV Pitch</th><td>2.743294363588305</td><th>zoom</th><td>0</td><th>Position</th></tr><tr class="sel"><th>Pano ID</th><td>CAoSLEFGMVFpcFBtMk9rUzVzdXVLMFlWalEyN3BwUy1sbGxneHZ0YlR1VlAyNG1l</td><th>POV Heading</th><td>196.0026583568417</td><th>POV Pitch</th><td>0.8707135469363578</td><th>zoom</th><td></td><th>Position</th></tr><tr class=""><th>Pano ID</th><td>-SHDOsbUbDPxvbz4Qvx2Eg</td><th>POV Heading</th><td>165.33294098449056</td><th>POV Pitch</th><td>1.17111854439473</td><th>zoom</th><td></td><th>Position</th></tr><tr class=""><th>Pano ID</th><td>0yfJCnICQIUAAAQIt--IJw</td><th>POV Heading</th><td>326.15916264236887</td><th>POV Pitch</th><td>0.6443494054917522</td><th>zoom</th><td></td><th>Position</th></tr></table><table id="t2" class="abs"><colgroup><col style="width:56.400px"><col style="width:161.800px"><col style="width:121.100px"><col style="width:217.700px"><col style="width:43.100px"><col style="width:244.800px"></colgroup><tr><th>name</th><td>R&amp;P IT Consulting GmbH</td><th>google place_id</th><td>ChIJ_WDYn329vUcRgNc07BmTveo</td><th>geo</th><td style="padding-top:5.500px;padding-bottom:5.500px">(, )<br>Christof-Ruthof-Weg 14, , Mainz-Kastel</td></tr></table><!--/CONTENT-->
</body></html>
